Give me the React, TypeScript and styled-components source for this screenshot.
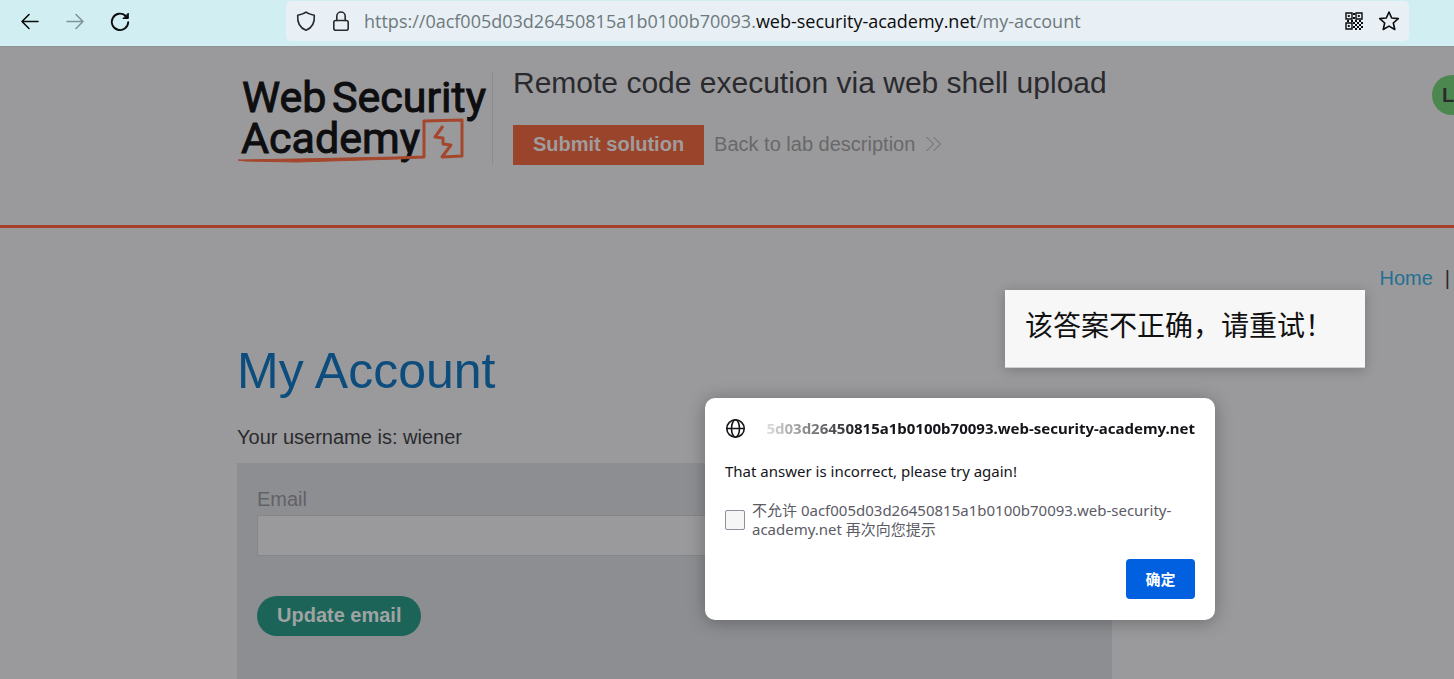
import React from 'react';
import styled, { createGlobalStyle } from 'styled-components';

const GlobalStyle = createGlobalStyle`
  *, *::before, *::after { box-sizing: border-box; }
  body {
    margin: 0;
    background: #9a9a9c;
    font-family: "Liberation Sans", Arial, sans-serif;
    font-size: 20px;
    line-height: 24px;
    color: #2a2a2e;
    overflow: hidden;
  }
  button, input { font: inherit; margin: 0; }
`;

const uiFont = '"Noto Sans", "Open Sans", "Noto Sans CJK SC", sans-serif';

const Screen = styled.div`
  position: relative;
  display: flex;
  flex-direction: column;
  height: 100vh;
  overflow: hidden;
`;

const Toolbar = styled.header`
  flex: none;
  display: flex;
  align-items: center;
  height: 46px;
  padding: 0 45px 4px 18px;
  background: #d1eff3;
`;

const NavButtons = styled.nav`
  flex: none;
  display: flex;
  gap: 21px;
  width: 268px;
`;

const IconButton = styled.button<{ $faded?: boolean }>`
  display: flex;
  padding: 0;
  border: 0;
  background: none;
  color: #0c0c0d;
  opacity: ${(p) => (p.$faded ? 0.4 : 1)};
`;

const AddressBar = styled.div`
  flex: 1;
  display: flex;
  align-items: center;
  gap: 11px;
  height: 40px;
  padding: 0 8px;
  border-radius: 5px;
  background: #e8eff5;
`;

const Url = styled.div`
  flex: 1;
  overflow: hidden;
  white-space: nowrap;
  font-family: "Open Sans", "Noto Sans", sans-serif;
  font-size: 18px;
  line-height: 24px;
  color: #6d7a7c;
  strong { font-weight: 400; color: #0c0c0d; }
`;

const LabHeader = styled.section`
  flex: none;
  display: flex;
  align-items: flex-start;
  height: 182px;
  padding: 24px 0 0 237px;
  border-top: 1px solid #929496;
  border-bottom: 3px solid #a5402b;
`;

const LogoLink = styled.a`
  flex: none;
  display: flex;
  width: 256px;
  border-right: 1px solid #8c8c8f;
`;

const LabInfo = styled.div`
  flex: 1;
  padding-left: 20px;
`;

const LabTitle = styled.h2`
  margin: 0 0 30px;
  font-size: 30px;
  font-weight: 400;
  line-height: 24px;
  white-space: nowrap;
`;

const Actions = styled.div`
  display: flex;
  align-items: center;
  gap: 10px;
`;

const SubmitButton = styled.button`
  height: 40px;
  padding: 0 20px 2px;
  border: 0;
  background: #9b442c;
  color: #9f9c9e;
  font-weight: 700;
`;

const BackLink = styled.a`
  display: flex;
  align-items: center;
  gap: 10px;
  padding-bottom: 2px;
  color: #68686b;
  text-decoration: none;
`;

const LabStatus = styled.div`
  flex: none;
  width: 22px;
  height: 40px;
  margin-top: 4px;
  padding-left: 10px;
  border-radius: 20px 0 0 20px;
  background: #4d8750;
  color: #2a2a2e;
  font-weight: 700;
  line-height: 40px;
`;

const Account = styled.main`
  flex: 1;
  display: flex;
  flex-direction: column;
  padding-left: 237px;
`;

const PageLinks = styled.nav`
  display: flex;
  justify-content: flex-end;
  gap: 12px;
  padding: 38px 4px 0 0;
  a { color: #256f93; text-decoration: none; }
`;

const Heading = styled.h1`
  margin: 51px 0 24px;
  font-size: 50px;
  font-weight: 400;
  line-height: 60px;
  color: #0d4d7d;
`;

const Username = styled.p`
  margin: 0 0 14px;
`;

const EmailForm = styled.form`
  flex: 1;
  display: flex;
  flex-direction: column;
  align-items: flex-start;
  width: 100%;
  max-width: 875px;
  padding: 24px 20px 0;
  background: #8d8e92;
`;

const FieldLabel = styled.label`
  margin-bottom: 4px;
  color: #626266;
`;

const EmailInput = styled.input`
  width: 100%;
  height: 41px;
  margin-bottom: 40px;
  padding: 0 10px;
  border: 1px solid #868688;
  background: #9a9a9c;
`;

const UpdateButton = styled.button`
  height: 40px;
  padding: 0 20px 2px;
  border: 0;
  border-radius: 20px;
  background: #1c6458;
  color: #9fa3a4;
  font-weight: 700;
`;

const Translation = styled.aside`
  position: absolute;
  top: 290px;
  left: 1005px;
  width: 360px;
  height: 78px;
  padding: 14px 20px;
  border-bottom: 1px solid #cfcfcf;
  background: #f7f7f7;
  box-shadow: 0 2px 12px rgba(0, 0, 0, 0.22);
  color: #111;
  font-family: "Noto Sans CJK SC", sans-serif;
  font-size: 28px;
  line-height: 40px;
  white-space: nowrap;
`;

const Dialog = styled.div`
  position: absolute;
  top: 398px;
  left: 705px;
  display: flex;
  flex-direction: column;
  width: 510px;
  padding: 20px 20px 21px;
  border-radius: 10px;
  background: #fff;
  box-shadow: 0 2px 18px rgba(0, 0, 0, 0.3);
  color: #15141a;
  font-family: ${uiFont};
  font-size: 15px;
  line-height: 20px;
`;

const DialogTitle = styled.div`
  display: flex;
  align-items: center;
  gap: 6px;
  margin-bottom: 23px;
`;

const Origin = styled.div`
  flex: 1;
  display: flex;
  justify-content: flex-end;
  overflow: hidden;
  font-weight: 700;
  white-space: nowrap;
  mask-image: linear-gradient(to right, transparent, #000 110px);
`;

const Message = styled.p`
  margin: 0 0 20px;
`;

const Suppress = styled.label`
  display: flex;
  align-items: center;
  gap: 7px;
  margin-bottom: 20px;
  line-height: 19px;
  color: #5b5b66;
`;

const Checkbox = styled.input`
  appearance: none;
  flex: none;
  width: 20px;
  height: 20px;
  border: 1px solid #8f8f9d;
  border-radius: 2px;
  background: #f6f6f6;
`;

const OkButton = styled.button`
  align-self: flex-end;
  width: 69px;
  height: 40px;
  border: 0;
  border-radius: 4px;
  background: #0060df;
  color: #fff;
  font-weight: 700;
`;

type IconProps = { children: React.ReactNode; size?: number };

const Icon = ({ children, size = 24 }: IconProps) => (
  <svg
    width={size}
    height={size}
    viewBox={`0 0 ${size} ${size}`}
    fill="none"
    stroke="currentColor"
    strokeWidth="1.6"
    strokeLinecap="round"
    strokeLinejoin="round"
    aria-hidden="true"
  >
    {children}
  </svg>
);

const qrCells = [
  [9, 2], [9, 6], [3, 9], [7, 9], [11, 9], [15, 9], [9, 11],
  [13, 11], [17, 11], [11, 13], [15, 13], [9, 15], [13, 15], [17, 15], [11, 17], [15, 17],
];

const Logo = () => (
  <svg width="255" height="94" viewBox="0 0 255 94" role="img" aria-label="Web Security Academy">
    <g
      fill="#0e0e10"
      stroke="#0e0e10"
      strokeWidth="1"
      fontFamily="Roboto, sans-serif"
      fontSize="43"
    >
      <text x="5" y="41">Web</text>
      <text x="95" y="41">Security</text>
      <text x="4" y="82">Academy</text>
    </g>
    <g fill="none" stroke="#a5472d" strokeWidth="3" strokeLinejoin="round">
      <path d="M159 87 L187 86 L187 50 L225 49 L225 85 L205 86 L214 74 L206 73 L206 67 L198 66 L206 55" />
      <path d="M1 89 L60 88 L159 86 L160 88 L60 91 L8 90 Z" fill="#a5472d" strokeWidth="1" />
    </g>
  </svg>
);

export default function App() {
  return (
    <Screen>
      <GlobalStyle />
      <Toolbar>
        <NavButtons>
          <IconButton aria-label="Back">
            <Icon><path d="M20 12.5H4M11 5.5l-7 7 7 7" /></Icon>
          </IconButton>
          <IconButton aria-label="Forward" $faded>
            <Icon><path d="M4 12.5h16M13 5.5l7 7-7 7" /></Icon>
          </IconButton>
          <IconButton aria-label="Reload">
            <Icon>
              <path d="M17.5 6.8A8.2 8.2 0 1 0 20.2 13.2" strokeWidth="1.9" />
              <path d="M20.3 4.5v5h-5z" fill="currentColor" strokeWidth="1" />
            </Icon>
          </IconButton>
        </NavButtons>
        <AddressBar>
          <Icon>
            <path d="M12 3 C14 4.8 17 5.7 20.3 6.2 C20.8 13 18.5 18.8 12 21.2 C5.5 18.8 3.2 13 3.7 6.2 C7 5.7 10 4.8 12 3Z" />
          </Icon>
          <Icon>
            <rect x="4.8" y="11.5" width="14.4" height="9.7" rx="2" />
            <path d="M7.8 11.5V7.2a4.2 4.2 0 0 1 8.4 0v4.300" />
          </Icon>
          <Url>
            https://0acf005d03d26450815a1b0100b70093.<strong>web-security-academy.net</strong>/my-account
          </Url>
          <IconButton aria-label="QR code">
            <Icon>
              <g transform="translate(3 3)" strokeWidth="1.4" strokeLinejoin="miter">
                <path d="M1 1h6v6h-6zM11 1h6v6h-6zM1 11h6v6h-6z" />
                <path d="M3.500 3.500h1v1h-1zM13.500 3.500h1v1h-1zM3.500 13.500h1v1h-1z" strokeWidth="1" />
                {qrCells.map(([x, y]) => (
                  <rect key={`${x}-${y}`} x={x - 1} y={y - 1} width="2" height="2" fill="currentColor" stroke="none" />
                ))}
              </g>
            </Icon>
          </IconButton>
          <IconButton aria-label="Bookmark">
            <Icon>
              <path d="M12 3l2.7 6 6.6.6-5 4.4 1.5 6.5L12 17.1l-5.8 3.4L7.700 14l-5-4.400 6.600-.6z" />
            </Icon>
          </IconButton>
        </AddressBar>
      </Toolbar>

      <LabHeader>
        <LogoLink href="#"><Logo /></LogoLink>
        <LabInfo>
          <LabTitle>Remote code execution via web shell upload</LabTitle>
          <Actions>
            <SubmitButton>Submit solution</SubmitButton>
            <BackLink href="#">
              Back to lab description
              <svg width="17" height="16" viewBox="0 0 17 16" fill="none" stroke="#68686b" aria-hidden="true">
                <path d="M1.5 1l7 7-7 7M8.5 1l7 7-7 7" />
              </svg>
            </BackLink>
          </Actions>
        </LabInfo>
        <LabStatus>L</LabStatus>
      </LabHeader>

      <Account>
        <PageLinks><a href="#">Home</a><span>|</span></PageLinks>
        <Heading>My Account</Heading>
        <Username>Your username is: wiener</Username>
        <EmailForm>
          <FieldLabel htmlFor="email">Email</FieldLabel>
          <EmailInput id="email" type="email" />
          <UpdateButton type="button">Update email</UpdateButton>
        </EmailForm>
      </Account>

      <Translation lang="zh-CN">该答案不正确，请重试！</Translation>

      <Dialog role="dialog" aria-label="Alert">
        <DialogTitle>
          <Icon size={20}>
            <circle cx="10.5" cy="10.5" r="8.7" />
            <ellipse cx="10.5" cy="10.5" rx="4" ry="8.7" />
            <path d="M2 10.5h17" />
          </Icon>
          <Origin>5d03d26450815a1b0100b70093.web-security-academy.net</Origin>
        </DialogTitle>
        <Message>That answer is incorrect, please try again!</Message>
        <Suppress>
          <Checkbox type="checkbox" />
          <span>不允许 0acf005d03d26450815a1b0100b70093.web-security-academy.net 再次向您提示</span>
        </Suppress>
        <OkButton>确定</OkButton>
      </Dialog>
    </Screen>
  );
}
